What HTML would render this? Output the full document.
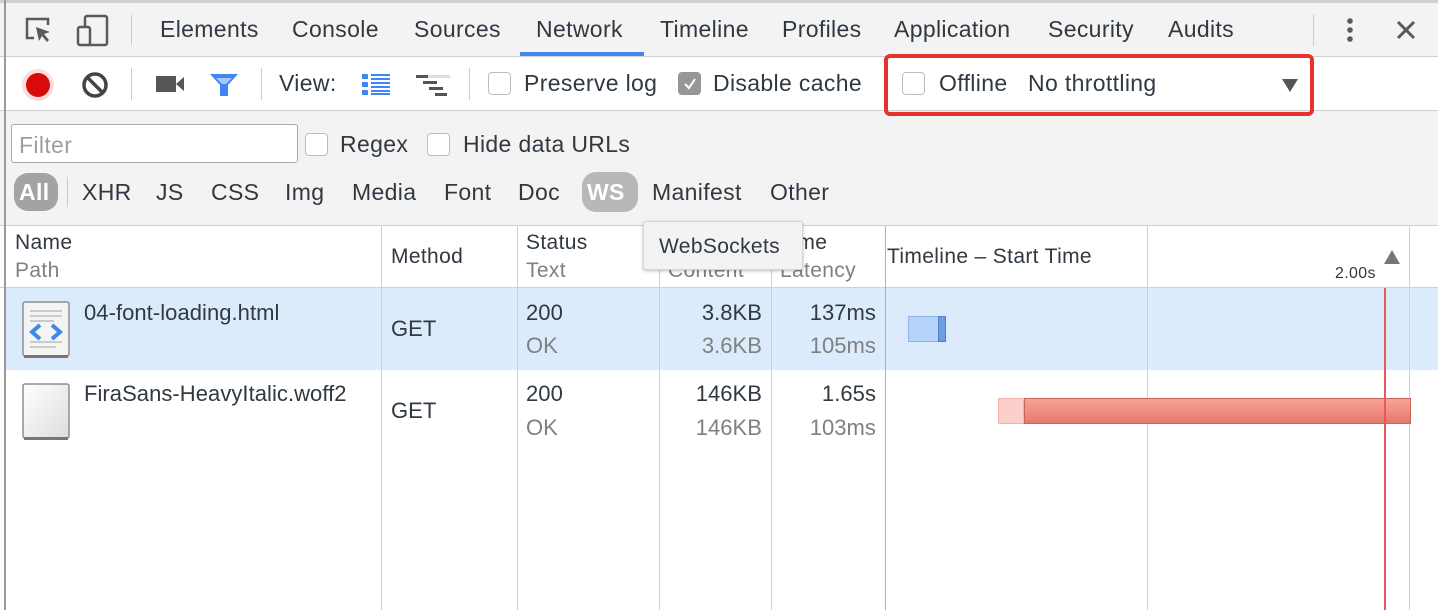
<!DOCTYPE html>
<html><head><meta charset="utf-8"><style>
*{margin:0;padding:0;box-sizing:border-box}
body{width:1438px;height:610px;overflow:hidden;background:#fff;font-family:"Liberation Sans",sans-serif;font-size:22px;color:#303942;position:relative;letter-spacing:.35px}
.a{position:absolute;white-space:nowrap}
.t{font-size:23px}
.r{letter-spacing:.05px}
.g{color:#808080}
.vl{position:absolute;width:1px;background:#d0d0d0}
.cb{position:absolute;width:23px;height:23px;border:1px solid #bdbdbd;border-radius:4px;background:#fff}
</style></head><body>
<div class="a" style="left:0;top:0;width:1438px;height:57px;background:#f3f3f3;border-top:3px solid #cfcfcf;border-bottom:1px solid #d0d0d0"></div>
<div class="a" style="left:0;top:57px;width:1438px;height:54px;background:#fff;border-bottom:1px solid #d0d0d0"></div>
<div class="a" style="left:0;top:111px;width:1438px;height:115px;background:#f3f3f3;border-bottom:1px solid #d0d0d0"></div>
<div class="a" style="left:0;top:287px;width:1438px;height:1px;background:#d0d0d0"></div>
<div class="a" style="left:5px;top:288px;width:1433px;height:82px;background:#dcebfc"></div>
<div class="a" style="left:4px;top:0;width:2px;height:610px;background:#9a9a9a"></div>

<svg class="a" style="left:24px;top:16px" width="32" height="30" viewBox="0 0 32 30"><path d="M10 22H3V3h21v6" fill="none" stroke="#5a5a5a" stroke-width="2.5"/><path d="M12 11l14 5-6 2 5 6-2 2-5-6-3 5z" fill="#5a5a5a"/></svg>
<svg class="a" style="left:76px;top:14px" width="34" height="34" viewBox="0 0 34 34"><rect x="9" y="2" width="22" height="29" rx="2" fill="none" stroke="#5a5a5a" stroke-width="2.5"/><rect x="2" y="13" width="12" height="18" rx="2" fill="#f3f3f3" stroke="#5a5a5a" stroke-width="2.5"/></svg>
<div class="a" style="left:131px;top:15px;width:1px;height:30px;background:#ccc"></div>
<div class="a t" style="left:160px;top:16px">Elements</div>
<div class="a t" style="left:292px;top:16px">Console</div>
<div class="a t" style="left:414px;top:16px">Sources</div>
<div class="a t" style="left:536px;top:16px">Network</div>
<div class="a" style="left:520px;top:52px;width:124px;height:4px;background:#4285f4"></div>
<div class="a t" style="left:660px;top:16px">Timeline</div>
<div class="a t" style="left:782px;top:16px">Profiles</div>
<div class="a t" style="left:894px;top:16px">Application</div>
<div class="a t" style="left:1048px;top:16px">Security</div>
<div class="a t" style="left:1168px;top:16px">Audits</div>
<div class="a" style="left:1313px;top:14px;width:1px;height:32px;background:#ccc"></div>
<svg class="a" style="left:1342px;top:16px" width="16" height="30"><circle cx="8" cy="5" r="2.8" fill="#5a5a5a"/><circle cx="8" cy="14" r="2.8" fill="#5a5a5a"/><circle cx="8" cy="23" r="2.8" fill="#5a5a5a"/></svg>
<svg class="a" style="left:1395px;top:19px" width="22" height="22"><path d="M3 3L19 19M19 3L3 19" stroke="#5a5a5a" stroke-width="3"/></svg>

<svg class="a" style="left:20px;top:67px" width="36" height="36"><circle cx="18" cy="18" r="16" fill="#f7c6c6" opacity=".6"/><circle cx="18" cy="18" r="12" fill="#d80a0a"/></svg>
<svg class="a" style="left:81px;top:71px" width="28" height="28"><circle cx="14" cy="14" r="11" fill="none" stroke="#444" stroke-width="3.5"/><path d="M6 6L22 22" stroke="#444" stroke-width="3.5"/></svg>
<div class="a" style="left:131px;top:68px;width:1px;height:32px;background:#ccc"></div>
<svg class="a" style="left:155px;top:74px" width="30" height="20"><rect x="1" y="2" width="20" height="16" fill="#555"/><path d="M21 10L29 3V17z" fill="#555"/></svg>
<svg class="a" style="left:208px;top:72px" width="32" height="26"><path d="M2 2H30L20 13V24H12V13z" fill="#4285f4"/><path d="M8 6H24L18 12H14z" fill="#a9c7fa"/></svg>
<div class="a" style="left:261px;top:68px;width:1px;height:32px;background:#ccc"></div>
<div class="a t" style="left:279px;top:70px">View:</div>
<svg class="a" style="left:361px;top:72px" width="30" height="24"><g fill="#4285f4"><rect x="1" y="2" width="6" height="5"/><rect x="10" y="2" width="19" height="2"/><rect x="10" y="6" width="19" height="2"/><rect x="1" y="10" width="6" height="5"/><rect x="10" y="10" width="19" height="2"/><rect x="10" y="14" width="19" height="2"/><rect x="1" y="18" width="6" height="5"/><rect x="10" y="18" width="19" height="2"/><rect x="10" y="21" width="19" height="2"/></g></svg>
<svg class="a" style="left:415px;top:74px" width="36" height="24"><rect x="1" y="1" width="12" height="3" fill="#555"/><rect x="13" y="1" width="22" height="3" fill="#ddd"/><rect x="8" y="7" width="14" height="3" fill="#555"/><rect x="14" y="13" width="14" height="3" fill="#555"/><rect x="20" y="19" width="12" height="3" fill="#555"/></svg>
<div class="a" style="left:469px;top:68px;width:1px;height:32px;background:#ccc"></div>
<div class="cb" style="left:488px;top:72px"></div>
<div class="a t" style="left:524px;top:70px">Preserve log</div>
<div class="cb" style="left:678px;top:72px;background:#969696;border-color:#969696"></div>
<svg class="a" style="left:682px;top:76px" width="16" height="16"><path d="M3 8l4 4 6-9" fill="none" stroke="#fff" stroke-width="2"/></svg>
<div class="a t" style="left:713px;top:70px">Disable cache</div>
<div class="a" style="left:884px;top:54px;width:430px;height:62px;border:4px solid #e5322d;border-radius:6px"></div>
<div class="cb" style="left:902px;top:72px"></div>
<div class="a t" style="left:939px;top:70px">Offline</div>
<div class="a t" style="left:1028px;top:70px">No throttling</div>
<svg class="a" style="left:1281px;top:78px" width="18" height="15"><path d="M1 1H17L9 14z" fill="#555"/></svg>

<div class="a" style="left:11px;top:124px;width:287px;height:39px;border:1px solid #a9a9a9;border-radius:3px;background:#fff"></div>
<div class="a t" style="left:19px;top:132px;color:#9e9e9e">Filter</div>
<div class="cb" style="left:305px;top:133px"></div>
<div class="a t" style="left:340px;top:131px">Regex</div>
<div class="cb" style="left:427px;top:133px"></div>
<div class="a t" style="left:463px;top:131px">Hide data URLs</div>
<div class="a" style="left:14px;top:173px;width:44px;height:38px;border-radius:14px;background:#a3a3a3"></div>
<div class="a t" style="left:19px;top:179px;color:#fff;font-weight:bold">All</div>
<div class="a" style="left:67px;top:177px;width:1px;height:30px;background:#ccc"></div>
<div class="a t" style="left:82px;top:179px">XHR</div>
<div class="a t" style="left:156px;top:179px">JS</div>
<div class="a t" style="left:211px;top:179px">CSS</div>
<div class="a t" style="left:285px;top:179px">Img</div>
<div class="a t" style="left:352px;top:179px">Media</div>
<div class="a t" style="left:444px;top:179px">Font</div>
<div class="a t" style="left:518px;top:179px">Doc</div>
<div class="a" style="left:582px;top:172px;width:56px;height:40px;border-radius:14px;background:#b8b8b8"></div>
<div class="a t" style="left:587px;top:179px;color:#fff;font-weight:bold">WS</div>
<div class="a t" style="left:652px;top:179px">Manifest</div>
<div class="a t" style="left:770px;top:179px">Other</div>

<div class="vl" style="left:381px;top:226px;height:384px"></div>
<div class="vl" style="left:517px;top:226px;height:384px"></div>
<div class="vl" style="left:659px;top:226px;height:384px"></div>
<div class="vl" style="left:771px;top:226px;height:384px"></div>
<div class="vl" style="left:885px;top:226px;height:384px;background:#b0b0b0"></div>
<div class="vl" style="left:1147px;top:226px;height:384px"></div>
<div class="vl" style="left:1409px;top:226px;height:384px"></div>

<div class="a" style="left:15px;top:231px;font-size:21px">Name</div>
<div class="a g" style="left:15px;top:259px;font-size:21px">Path</div>
<div class="a" style="left:391px;top:245px;font-size:21px">Method</div>
<div class="a" style="left:526px;top:231px;font-size:21px">Status</div>
<div class="a g" style="left:526px;top:259px;font-size:21px">Text</div>
<div class="a g" style="left:668px;top:259px;font-size:21px">Content</div>
<div class="a" style="left:780px;top:231px;font-size:21px">Time</div>
<div class="a g" style="left:780px;top:259px;font-size:21px">Latency</div>
<div class="a" style="left:887px;top:245px;font-size:21px">Timeline – Start Time</div>
<div class="a" style="left:1335px;top:265px;font-size:16px">2.00s</div>
<svg class="a" style="left:1383px;top:249px" width="18" height="16"><path d="M1 15H17L9 1z" fill="#777"/></svg>

<div class="a" style="left:643px;top:221px;width:160px;height:49px;background:#f3f3f3;border:1px solid #d4d4d4;border-radius:3px;box-shadow:0 1px 3px rgba(0,0,0,.25)"></div>
<div class="a" style="left:659px;top:235px;font-size:21px">WebSockets</div>

<svg class="a" style="left:22px;top:301px" width="48" height="58"><rect x="1" y="1" width="46" height="54" rx="2" fill="#f4f4f4" stroke="#8e8e8e" stroke-width="1.5"/><rect x="2" y="54" width="44" height="3" fill="#777"/><g stroke="#bbb" stroke-width="1.5"><path d="M8 10H40M8 15H40M8 20H32M8 41H40M8 46H34"/></g><path d="M18 24L10 31L18 38M30 24L38 31L30 38" fill="none" stroke="#3f8ae8" stroke-width="4"/></svg>
<div class="a r" style="left:84px;top:300px">04-font-loading.html</div>
<div class="a r" style="left:391px;top:316px">GET</div>
<div class="a r" style="left:526px;top:300px">200</div>
<div class="a g r" style="left:526px;top:333px">OK</div>
<div class="a r" style="left:659px;top:300px;width:103px;text-align:right">3.8KB</div>
<div class="a g r" style="left:659px;top:333px;width:103px;text-align:right">3.6KB</div>
<div class="a r" style="left:771px;top:300px;width:105px;text-align:right">137ms</div>
<div class="a g r" style="left:771px;top:333px;width:105px;text-align:right">105ms</div>
<div class="a" style="left:908px;top:316px;width:32px;height:26px;background:#b5d3fb;border:1px solid #8fb3e6"></div>
<div class="a" style="left:938px;top:316px;width:8px;height:26px;background:#6d9fe0;border:1px solid #4e7fc7"></div>

<svg class="a" style="left:22px;top:383px" width="48" height="58"><defs><linearGradient id="gr" x1="0" y1="0" x2="1" y2="1"><stop offset="0" stop-color="#fff"/><stop offset="1" stop-color="#ddd"/></linearGradient></defs><rect x="1" y="1" width="46" height="54" rx="2" fill="url(#gr)" stroke="#8e8e8e" stroke-width="1.5"/><rect x="2" y="54" width="44" height="3" fill="#777"/></svg>
<div class="a r" style="left:84px;top:381px">FiraSans-HeavyItalic.woff2</div>
<div class="a r" style="left:391px;top:398px">GET</div>
<div class="a r" style="left:526px;top:381px">200</div>
<div class="a g r" style="left:526px;top:415px">OK</div>
<div class="a r" style="left:659px;top:381px;width:103px;text-align:right">146KB</div>
<div class="a g r" style="left:659px;top:415px;width:103px;text-align:right">146KB</div>
<div class="a r" style="left:771px;top:381px;width:105px;text-align:right">1.65s</div>
<div class="a g r" style="left:771px;top:415px;width:105px;text-align:right">103ms</div>
<div class="a" style="left:998px;top:398px;width:26px;height:26px;background:#fbd0cb;border:1px solid #f0b3ac"></div>
<div class="a" style="left:1024px;top:398px;width:387px;height:26px;background:linear-gradient(#f9a396,#e37a6c);border:1px solid #c8665a"></div>

<div class="a" style="left:1384px;top:288px;width:2px;height:322px;background:#e85a5a"></div>
</body></html>
